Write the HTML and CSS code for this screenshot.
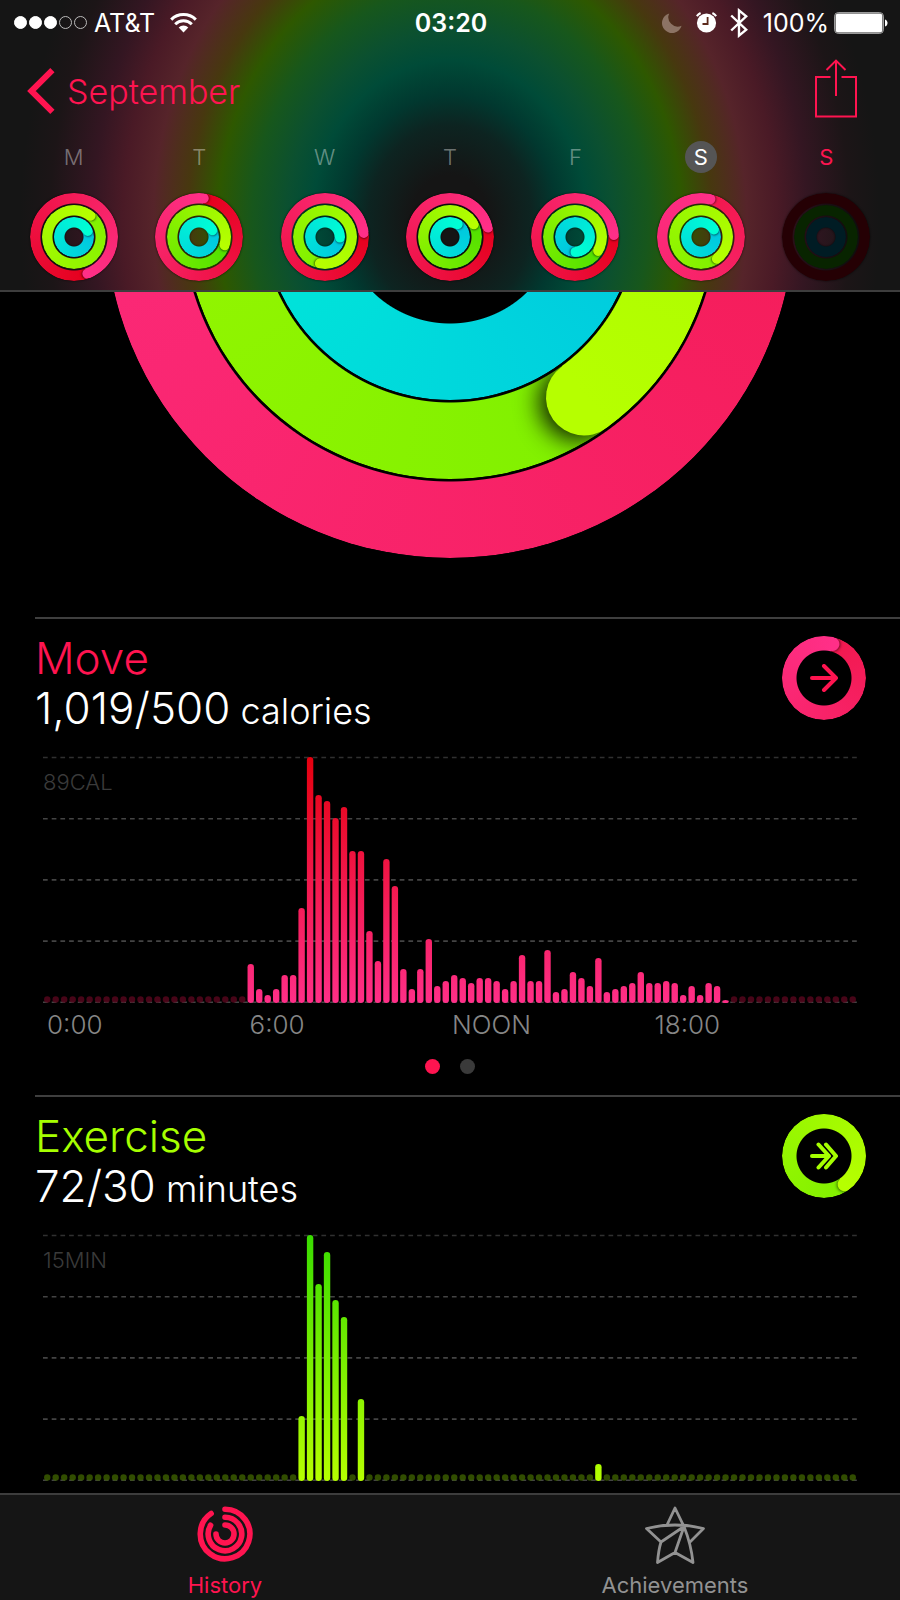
FILE: index.html
```
<!DOCTYPE html>
<html lang="en">
<head>
    <meta charset="utf-8">
    <meta name="viewport" content="width=device-width, initial-scale=1">
    <title>Activity</title>
    <link rel="stylesheet" href="styles.css">
</head>
<body>
    <!-- Header: status bar, navigation, week -->
    <header class="top">
        <div class="status">
            <div class="status-left">
                <span class="signal"><i class="on"></i><i class="on"></i><i class="on"></i><i></i><i></i></span>
                <span>AT&amp;T</span>
                <svg class="wifi" width="27" height="20" viewBox="0 0 27 20" fill="none" stroke="#fff" stroke-width="3">
                    <path d="M1.2 6.6a17.6 17.6 0 0 1 24.6 0"/>
                    <path d="M5.2 11.2a11.8 11.8 0 0 1 16.6 0"/>
                    <path d="M13.5 19.5l-4.8-5a6.8 6.8 0 0 1 9.6 0z" fill="#fff" stroke="none"/>
                </svg>
            </div>
            <strong class="clock">03:20</strong>
            <div class="status-right">
                <svg width="20" height="20" viewBox="0 0 20 20" fill="#8c7364">
                    <path d="M7.2 .4A10 10 0 1 0 19.6 12.8 9.4 9.4 0 0 1 7.2 .4z"/>
                </svg>
                <svg class="alarm" width="21" height="21" viewBox="0 0 21 21">
                    <circle cx="10.5" cy="11" r="9.6" fill="#fff"/>
                    <path d="M.8 4.2A11 11 0 0 1 4.6 1M20.2 4.2A11 11 0 0 0 16.4 1" stroke="#fff" stroke-width="2" fill="none"/>
                    <path d="M11.6 5v7H6.5" stroke="#5c2a1c" stroke-width="1.8" fill="none"/>
                </svg>
                <svg class="bluetooth" width="18" height="30" viewBox="0 0 18 30" fill="none" stroke="#fff" stroke-width="2.4">
                    <path d="M1.2 7.5l15 14.2L9 27.6V2.4l7.2 5.9-15 14.2"/>
                </svg>
                <span>100%</span>
                <svg class="battery" width="54" height="22" viewBox="0 0 54 22">
                    <rect x=".6" y=".6" width="48.8" height="20.8" rx="3.6" fill="none" stroke="#aaa"/>
                    <rect x="1.6" y="1.6" width="46.8" height="18.8" rx="2.6" fill="#fff"/>
                    <path d="M51 7.6c3.4 1 3.4 6 0 7z" fill="#fff"/>
                </svg>
            </div>
        </div>

        <nav class="bar">
            <a class="back" href="#">
                <svg width="28" height="46" viewBox="0 0 28 46" fill="none" stroke="#ff1450" stroke-width="6">
                    <path d="M25.4 2.2L4.4 23l21 20.8"/>
                </svg>
                September
            </a>
            <button class="share" aria-label="Share">
                <svg width="42" height="59" viewBox="0 0 42 59" fill="none" stroke="#ff1450" stroke-width="2">
                    <path d="M15.500 18H1v39.500h40V18H26.500M21 37V2M11.500 11L21 1.600 30.500 11"/>
                </svg>
            </button>
        </nav>

        <div class="week" id="week"></div>
    </header>

    <main>
        <section class="hero" id="hero"></section>

        <section class="card move">
            <div class="card-head">
                <div>
                    <h2>Move</h2>
                    <p>1,019/500<small> calories</small></p>
                </div>
                <button class="toggle" id="moveToggle" aria-label="Move details">
                    <svg width="28" height="28" viewBox="0 0 28 28">
                        <path d="M2 14h24M14 2l12 12-12 12"/>
                    </svg>
                </button>
            </div>
            <div class="chart" id="moveChart"><span class="peak">89CAL</span></div>
            <div class="hours"><span>0:00</span><span>6:00</span><span>NOON</span><span>18:00</span></div>
            <div class="pager"><i class="on"></i><i></i></div>
        </section>

        <section class="card exercise">
            <div class="card-head">
                <div>
                    <h2>Exercise</h2>
                    <p>72/30<small> minutes</small></p>
                </div>
                <button class="toggle" id="exerciseToggle" aria-label="Exercise details">
                    <svg width="28" height="28" viewBox="0 0 28 28">
                        <path d="M2 14h17M8.500 2.500L19 14 8.500 25.500M16 2.500L26 14 16 25.500"/>
                    </svg>
                </button>
            </div>
            <div class="chart" id="exerciseChart"><span class="peak">15MIN</span></div>
            <div class="hours"><span>0:00</span><span>6:00</span><span>NOON</span><span>18:00</span></div>
            <div class="pager"><i class="on"></i><i></i></div>
        </section>
    </main>

    <!-- Tab bar -->
    <nav class="tabs">
        <a class="tab active" href="#">
            <svg width="56" height="56" viewBox="-28 -28 56 56" fill="none" stroke="currentColor" stroke-width="5.6" stroke-linecap="round">
                <path d="M0-24.800A24.800 24.800 0 1 1-13.900-20.500"/>
                <path d="M0-16.800A16.800 16.800 0 1 1-14.400-8.700"/>
                <path d="M0-9A9 9 0 1 1-9 0"/>
            </svg>
            History
        </a>
        <a class="tab" href="#">
            <svg width="60" height="58" viewBox="0 0 60 58" fill="none" stroke="currentColor" stroke-width="2.8" stroke-linejoin="round">
                <path d="M22 19L30 2 39 20.500Q46 38 48 56.500L30 46.500 12.500 56.500Q13.500 44 16 36L1.500 22.500Q30 15.500 58.500 22.500L45 36M16 36L39 20.500 30 46.500"/>
            </svg>
            Achievements
        </a>
    </nav>

    <script>
    // Ring colours: [start of the lap, end of the lap]
    const PINK = ['#e5001c', '#ff2f88'];
    const PINK2 = ['#f2184e', '#ff2f88'];
    const GREEN = ['#4fe000', '#b6ff00'];
    const GREEN2 = ['#80f000', '#b6ff00'];
    const CYAN = ['#00c4e0', '#00ffd4'];

    // Each day: label, then angle + colours for move, exercise, stand
    const week = [
        { day: 'M', rings: [[160, PINK], [38, GREEN2], [66, CYAN]] },
        { day: 'T', rings: [[7, PINK], [108, GREEN], [63, CYAN]] },
        { day: 'W', rings: [[84, PINK], [191, GREEN2], [92, CYAN]] },
        { day: 'T', rings: [[76, PINK], [62, GREEN], [31, CYAN]] },
        { day: 'F', rings: [[87, PINK], [121, GREEN], [178, CYAN]] },
        { day: 'S', rings: [[14, PINK2], [144, GREEN2], [60, CYAN]], state: 'selected' },
        { day: 'S', rings: null, state: 'today' }
    ];

    function ringHtml(level, angle, colors) {
        return `<div class="ring ring-${level}" style="--angle:${angle}deg;--from:${colors[0]};--to:${colors[1]}"><i class="cap"></i></div>`;
    }

    function ringsHtml(rings) {
        if (!rings) {
            return '<div class="ring ring-1 empty"></div><div class="ring ring-2 empty"></div><div class="ring ring-3 empty"></div>';
        }
        return rings.map((r, i) => ringHtml(i + 1, r[0], r[1])).join('');
    }

    document.getElementById('week').innerHTML = week.map(d => `
        <div class="day ${d.state || ''}">
            <span class="day-name">${d.day}</span>
            <div class="rings small">${ringsHtml(d.rings)}</div>
        </div>`).join('');

    document.getElementById('hero').innerHTML = `<div class="rings big">${ringsHtml(week[5].rings)}</div>`;
    document.getElementById('moveToggle').insertAdjacentHTML('beforeend', ringHtml(1, 14, PINK2));
    document.getElementById('exerciseToggle').insertAdjacentHTML('beforeend', ringHtml(1, 144, GREEN2));

    // One bar for each quarter of an hour, 0 draws a dot
    const move = new Array(96).fill(0);
    [39, 14, 8, 14, 28, 28, 95, 246, 208, 202, 185, 196, 152, 152, 72, 42, 144, 117, 34, 14, 34, 64, 17, 22,
     28, 25, 20, 25, 25, 22, 14, 22, 48, 22, 22, 53, 11, 14, 31, 25, 17, 45, 11, 14, 17, 20, 31, 20, 20, 22,
     20, 8, 17, 8, 20, 17, 3].forEach((v, i) => move[24 + i] = v);

    const exercise = new Array(96).fill(0);
    [65, 246, 197, 229, 181, 164, 0, 82].forEach((v, i) => exercise[30 + i] = v);
    exercise[65] = 17;

    function drawChart(id, values, top, bottom, dot) {
        const step = 814 / 96;
        let dots = '', bars = '', lines = '';
        values.forEach((v, i) => {
            const x = (i + 0.5) * step;
            if (v) {
                bars += `<rect x="${x - 3.2}" y="${247 - v}" width="6.4" height="${v}" rx="3.2"/>`;
            } else {
                dots += `<circle cx="${x}" cy="243.5" r="3.2"/>`;
            }
        });
        for (let i = 0; i < 5; i++) {
            const y = 1.5 + i * 61.2;
            lines += `<path d="M0 ${y}H814" stroke="${i ? '#444' : '#303030'}"/>`;
        }
        document.getElementById(id).insertAdjacentHTML('beforeend', `
            <svg viewBox="0 0 814 248">
                <linearGradient id="${id}Fill" gradientUnits="userSpaceOnUse" x1="0" y1="0" x2="0" y2="247">
                    <stop offset="0" stop-color="${top}"/><stop offset="1" stop-color="${bottom}"/>
                </linearGradient>
                <g stroke-width="1.6" stroke-dasharray="4.700 4">${lines}</g>
                <g fill="${dot}" fill-opacity=".85">${dots}</g>
                <g fill="url(#${id}Fill)">${bars}</g>
            </svg>`);
    }

    drawChart('moveChart', move, '#e5000e', '#ff2f88', '#55061c');
    drawChart('exerciseChart', exercise, '#38dc00', '#b6ff00', '#3a5a00');
    </script>
</body>
</html>
```
FILE: styles.css
```
* {
    box-sizing: border-box;
}

body {
    margin: 0;
    height: 100vh;
    display: flex;
    flex-direction: column;
    overflow: hidden;
    background: #000;
    color: #fff;
    font-family: Inter, "Liberation Sans", sans-serif;
    font-weight: 300;
}

svg {
    display: block;
    flex: none;
}

a {
    text-decoration: none;
}

button {
    background: none;
    border: none;
    padding: 0;
    cursor: pointer;
}

/* Header, with the rings glowing through it */
.top {
    flex: none;
    border-bottom: 2px solid #3d3d3d;
    padding-bottom: 9px;
    background: radial-gradient(430px 500px at 50% 220px,
        #151515 9%, #0d2421 19%, #01382f 25%, #004b38 32%, #0b5030 38%,
        #17571c 46%, #2e5800 54%, #47380f 61%, #56242a 69%,
        #4a1a26 76%, #341622 83%, #1c1517 93%, #151515 100%);
}

/* Status bar */
.status {
    display: grid;
    grid-template-columns: 1fr auto 1fr;
    align-items: center;
    height: 45px;
    padding: 0 12px 0 14px;
    font-size: 25px;
    font-weight: 400;
}

.status-left,
.status-right {
    display: flex;
    align-items: center;
}

.status-right {
    justify-content: flex-end;
}

.signal {
    display: flex;
    gap: 2px;
    margin-right: 7px;
}

.signal i {
    width: 13px;
    height: 13px;
    border: 1px solid #bbb;
    border-radius: 50%;
}

.signal .on {
    background: #fff;
    border-color: #fff;
}

.wifi {
    margin-left: 15px;
}

.clock {
    font-weight: 600;
}

.alarm {
    margin-left: 14px;
}

.bluetooth {
    margin: 0 15px 0 13px;
}

.battery {
    margin-left: 5px;
}

/* Navigation */
.bar {
    display: flex;
    justify-content: space-between;
    align-items: center;
    height: 92px;
    margin-bottom: 4px;
    padding: 0 43px 0 27px;
}

.back {
    display: flex;
    align-items: center;
    gap: 12px;
    color: #ff1450;
    font-size: 34px;
}

.share {
    align-self: flex-start;
    margin-top: 14px;
}

/* Week strip */
.week {
    display: grid;
    grid-template-columns: repeat(7, 1fr);
    padding: 0 11px;
}

.day {
    display: flex;
    flex-direction: column;
    align-items: center;
    gap: 20px;
}

.day-name {
    width: 32px;
    line-height: 32px;
    border-radius: 50%;
    text-align: center;
    font-size: 22px;
    color: rgba(255, 255, 255, 0.4);
}

.selected .day-name {
    background: #555;
    color: #fff;
    font-weight: 400;
}

.today .day-name {
    color: #ff1450;
    font-weight: 400;
}

/* Activity rings */
.rings {
    display: grid;
    place-items: center;
    flex: none;
}

.ring {
    grid-area: 1 / 1;
    display: grid;
    width: var(--size);
    height: var(--size);
    border-radius: 50%;
    overflow: hidden;
    background: conic-gradient(from var(--angle), var(--from), var(--to));
    -webkit-mask: radial-gradient(closest-side, transparent calc(100% - var(--band) - 1px), #000 calc(100% - var(--band)));
    mask: radial-gradient(closest-side, transparent calc(100% - var(--band) - 1px), #000 calc(100% - var(--band)));
}

/* Second half of the lap goes over the cap, so its shadow only falls forward */
.ring::after {
    content: "";
    grid-area: 1 / 1;
    z-index: 1;
    background: conic-gradient(from var(--angle), transparent 50%, color-mix(in srgb, var(--from), var(--to)) 50%, var(--to));
}

.cap {
    grid-area: 1 / 1;
    width: var(--band);
    height: var(--band);
    margin: 0 auto;
    border-radius: 50%;
    background: var(--to);
    box-shadow: var(--shadow);
    transform-origin: 50% calc(var(--size) / 2);
    transform: rotate(var(--angle));
}

.small {
    --band: 10px;
    --shadow: 1px 0 2px rgba(0, 0, 0, 0.5);
    filter: drop-shadow(0 0 1px rgba(0, 0, 0, 0.7));
}

.small .ring-1 { --size: 88px; }
.small .ring-2 { --size: 64px; }
.small .ring-3 { --size: 40px; }

.big {
    --band: 76px;
    --shadow: 8px 0 24px rgba(0, 0, 0, 0.9);
}

.big .ring-1 { --size: 690px; }
.big .ring-2 { --size: 532px; }
.big .ring-3 { --size: 374px; }

.ring-1.empty { background: #250004; }
.ring-2.empty { background: #082400; }
.ring-3.empty { background: #001c24; }

.empty::after {
    display: none;
}

main {
    flex: 1;
    min-height: 0;
    overflow: hidden;
}

.hero {
    display: flex;
    justify-content: center;
    align-items: flex-end;
    height: 325px;
    padding-bottom: 59px;
    overflow: hidden;
}

.card {
    margin-left: 35px;
    padding: 14px 0 21px;
    border-top: 2px solid #3f3f3f;
}

.move { --color: #ff1450; }
.exercise { --color: #a6ff00; }

.card-head {
    display: flex;
    justify-content: space-between;
    padding-right: 34px;
}

.card h2,
.card p {
    margin: 0;
    font-size: 44px;
    line-height: 50px;
    font-weight: 350;
}

.card h2 {
    color: var(--color);
}

.card small {
    font-size: 36px;
    line-height: 36px;
}

.toggle {
    display: grid;
    place-items: center;
    align-self: flex-start;
    margin-top: 3px;
    --size: 84px;
    --band: 14px;
    --shadow: 1px 0 3px rgba(0, 0, 0, 0.6);
}

.toggle svg {
    grid-area: 1 / 1;
    fill: none;
    stroke: var(--color);
    stroke-width: 4;
    stroke-linecap: round;
    stroke-linejoin: round;
}

.chart {
    position: relative;
    margin: 23px 43px 5px 8px;
}

/* Scale label lying over the chart */
.peak {
    position: absolute;
    top: 13px;
    left: 0;
    font-size: 22px;
    color: #3a3a3a;
}

.hours {
    display: grid;
    grid-template-columns: repeat(4, 1fr);
    margin: 0 43px 0 8px;
    padding-left: 4px;
    font-size: 26px;
    line-height: 32px;
    color: #868686;
}

.pager {
    display: flex;
    justify-content: center;
    gap: 20px;
    margin-top: 18px;
    padding-right: 35px;
}

.pager i {
    width: 15px;
    height: 15px;
    border-radius: 50%;
    background: #3a3a3a;
}

.pager .on {
    background: var(--color);
}

/* Tab bar */
.tabs {
    flex: none;
    display: grid;
    grid-template-columns: 1fr 1fr;
    height: 107px;
    border-top: 2px solid #3d3d3d;
    background: #151515;
}

.tab {
    display: flex;
    flex-direction: column;
    align-items: center;
    justify-content: space-between;
    padding: 11px 0 0;
    font-size: 22px;
    line-height: 30px;
    font-weight: 400;
    color: #929292;
}

.tab.active {
    color: #ff1450;
}
```
